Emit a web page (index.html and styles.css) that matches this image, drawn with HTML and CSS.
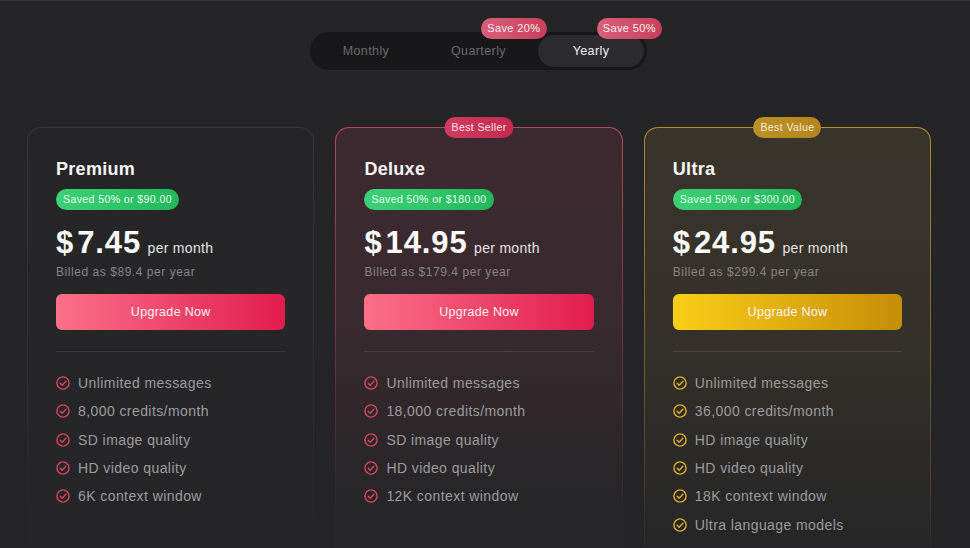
FILE: index.html
```html
<!DOCTYPE html>
<html lang="en">
<head>
  <meta charset="UTF-8">
  <meta name="viewport" content="width=device-width, initial-scale=1.0">
  <title>Pricing</title>
  <link rel="stylesheet" href="styles.css">
</head>
<body>
  <svg class="svg-defs" width="0" height="0" aria-hidden="true">
    <symbol id="check" viewBox="0 0 14 14">
      <circle cx="7" cy="7" r="6.1" fill="none" stroke="currentColor" stroke-width="1.4"/>
      <path d="M4.2 7.2l2 2 3.7-3.9" fill="none" stroke="currentColor" stroke-width="1.4" stroke-linecap="round" stroke-linejoin="round"/>
    </symbol>
  </svg>

  <div class="period-wrap">
    <div class="period-toggle">
      <div class="period">Monthly</div>
      <div class="period">Quarterly<span class="save-tag">Save 20%</span></div>
      <div class="period active">Yearly<span class="save-tag save-tag-last">Save 50%</span></div>
    </div>
  </div>

  <div class="plans">
    <div class="plan plan-premium">
      <h2 class="plan-name">Premium</h2>
      <span class="saved">Saved 50% or $90.00</span>
      <div class="price"><span class="amount"><span class="dollar">$</span>7.45</span> <span class="per">per month</span></div>
      <div class="billed">Billed as $89.4 per year</div>
      <button class="upgrade">Upgrade Now</button>
      <ul class="features">
        <li><svg class="tick"><use href="#check"/></svg>Unlimited messages</li>
        <li><svg class="tick"><use href="#check"/></svg>8,000 credits/month</li>
        <li><svg class="tick"><use href="#check"/></svg>SD image quality</li>
        <li><svg class="tick"><use href="#check"/></svg>HD video quality</li>
        <li><svg class="tick"><use href="#check"/></svg>6K context window</li>
      </ul>
    </div>

    <div class="plan plan-deluxe">
      <span class="ribbon">Best Seller</span>
      <h2 class="plan-name">Deluxe</h2>
      <span class="saved">Saved 50% or $180.00</span>
      <div class="price"><span class="amount"><span class="dollar">$</span>14.95</span> <span class="per">per month</span></div>
      <div class="billed">Billed as $179.4 per year</div>
      <button class="upgrade">Upgrade Now</button>
      <ul class="features">
        <li><svg class="tick"><use href="#check"/></svg>Unlimited messages</li>
        <li><svg class="tick"><use href="#check"/></svg>18,000 credits/month</li>
        <li><svg class="tick"><use href="#check"/></svg>SD image quality</li>
        <li><svg class="tick"><use href="#check"/></svg>HD video quality</li>
        <li><svg class="tick"><use href="#check"/></svg>12K context window</li>
      </ul>
    </div>

    <div class="plan plan-ultra">
      <span class="ribbon">Best Value</span>
      <h2 class="plan-name">Ultra</h2>
      <span class="saved">Saved 50% or $300.00</span>
      <div class="price"><span class="amount"><span class="dollar">$</span>24.95</span> <span class="per">per month</span></div>
      <div class="billed">Billed as $299.4 per year</div>
      <button class="upgrade">Upgrade Now</button>
      <ul class="features">
        <li><svg class="tick"><use href="#check"/></svg>Unlimited messages</li>
        <li><svg class="tick"><use href="#check"/></svg>36,000 credits/month</li>
        <li><svg class="tick"><use href="#check"/></svg>HD image quality</li>
        <li><svg class="tick"><use href="#check"/></svg>HD video quality</li>
        <li><svg class="tick"><use href="#check"/></svg>18K context window</li>
        <li><svg class="tick"><use href="#check"/></svg>Ultra language models</li>
      </ul>
    </div>
  </div>
</body>
</html>
```

FILE: styles.css
```css
body {
  margin: 0;
  height: 548px;
  box-sizing: border-box;
  overflow: hidden;
  background-color: #252527;
  border-top: 1px solid #38383a;
  font-family: "Liberation Sans", Arial, sans-serif;
  color: #fff;
}

.svg-defs {
  position: absolute;
}

/* billing period switch */
.period-wrap {
  display: flex;
  justify-content: center;
  padding: 31px 13px 0 0;
}

.period-toggle {
  display: flex;
  gap: 6.5px;
  padding: 3px;
  background-color: #18181a;
  border-radius: 19px;
}

.period {
  position: relative;
  width: 106px;
  height: 32px;
  line-height: 32px;
  text-align: center;
  font-size: 12.5px;
  letter-spacing: 0.4px;
  color: #6a6a6d;
  border-radius: 16px;
}

.period.active {
  background-color: #2c2c30;
  color: #f2f2f2;
}

.save-tag {
  position: absolute;
  top: -17px;
  right: -15px;
  height: 21px;
  line-height: 21px;
  padding: 0 6px;
  font-size: 11px;
  letter-spacing: 0.4px;
  color: #fbeef0;
  background: linear-gradient(90deg, #d9607a, #c9405c);
  border-radius: 11px;
  white-space: nowrap;
}

.save-tag-last {
  right: -18px;
}

/* plan cards */
.plans {
  display: flex;
  gap: 21px;
  padding: 57px 0 0 27px;
}

.plan {
  position: relative;
  flex: none;
  box-sizing: border-box;
  width: 287.4px;
  height: 420px;
  padding: 30px 28px 0;
  border: 1px solid transparent;
  border-bottom: none;
  border-radius: 14px 14px 0 0;
}

.plan-premium {
  --accent: #d9455f;
  background:
    linear-gradient(#262628, #262628) padding-box,
    linear-gradient(#37373a, #2d2d30 70%, #252527 95%) border-box;
}

.plan-deluxe {
  --accent: #d9455f;
  background:
    linear-gradient(#3d2a30, #392a2f 45%, #272628 88%) padding-box,
    linear-gradient(#b04a62, #6a323e 55%, #2a2829 92%) border-box;
}

.plan-ultra {
  --accent: #e0ad2b;
  background:
    linear-gradient(#3a352b, #35312a 48%, #272728 96%) padding-box,
    linear-gradient(#b08c32, #6f5c2e 60%, #2e2c29 100%) border-box;
}

.ribbon {
  position: absolute;
  top: -11px;
  left: 50%;
  transform: translateX(-50%);
  height: 21px;
  line-height: 21px;
  padding: 0 7px;
  font-size: 10.5px;
  letter-spacing: 0.4px;
  white-space: nowrap;
  border-radius: 11px;
  color: #f6e6e9;
}

.plan-deluxe .ribbon {
  background: linear-gradient(90deg, #d23c5e, #c22a4e);
}

.plan-ultra .ribbon {
  background: linear-gradient(90deg, #bc8f28, #b5851c);
  color: #f5ecd6;
}

.plan-name {
  margin: 0;
  font-size: 18px;
  line-height: 22px;
  font-weight: bold;
  letter-spacing: 0.3px;
  color: #f7f7f7;
}

.saved {
  display: inline-block;
  margin-top: 9px;
  height: 21px;
  line-height: 21px;
  padding: 0 7px;
  font-size: 10.5px;
  letter-spacing: 0.42px;
  color: #eafbef;
  background: linear-gradient(90deg, #3dd177, #22b85a);
  border-radius: 11px;
}

.price {
  margin-top: 14px;
  height: 38px;
  line-height: 38px;
  white-space: nowrap;
}

.amount {
  font-size: 31px;
  font-weight: bold;
  letter-spacing: 0.9px;
}

.dollar {
  margin-right: 3px;
}

.per {
  margin-left: 2px;
  font-size: 14px;
  letter-spacing: 0.3px;
  color: #e4e4e4;
}

.billed {
  margin-top: 2px;
  font-size: 12px;
  line-height: 16px;
  letter-spacing: 0.55px;
  color: #858588;
}

.upgrade {
  display: block;
  width: 100%;
  height: 36px;
  margin-top: 14px;
  padding: 0;
  border: none;
  border-radius: 6px;
  font-family: inherit;
  font-size: 12.5px;
  letter-spacing: 0.3px;
  color: #fdf3f3;
  background: linear-gradient(90deg, #fb7088, #e21d4e);
}

.plan-ultra .upgrade {
  background: linear-gradient(90deg, #f9ce17, #c68d08);
}

.features {
  list-style: none;
  margin: 21px 0 0;
  padding: 17px 0 0;
  border-top: 1px solid #39393b;
}

.plan-deluxe .features {
  border-top-color: #4e3b41;
}

.plan-ultra .features {
  border-top-color: #4c463a;
}

.features li {
  display: flex;
  align-items: center;
  gap: 8px;
  height: 28.3px;
  font-size: 14px;
  letter-spacing: 0.42px;
  color: #9c9c9f;
}

.tick {
  flex: none;
  width: 14px;
  height: 14px;
  color: var(--accent);
}
```
